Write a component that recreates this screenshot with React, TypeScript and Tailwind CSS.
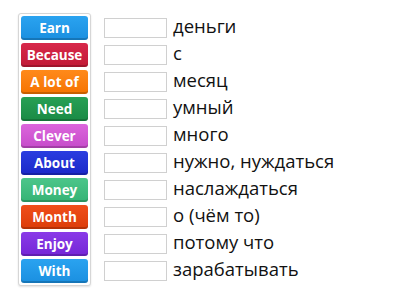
import React from 'react';

const tiles = [
  { label: 'Earn', cls: 'bg-gradient-to-b from-[#2aa3f0] to-[#1a8fe0]' },
  { label: 'Because', cls: 'bg-gradient-to-b from-[#d8284a] to-[#c11a36]' },
  { label: 'A lot of', cls: 'bg-gradient-to-b from-[#ff8a1a] to-[#f57300]' },
  { label: 'Need', cls: 'bg-gradient-to-b from-[#28a055] to-[#1a8a45]' },
  { label: 'Clever', cls: 'bg-gradient-to-b from-[#dc66dc] to-[#c64bca]' },
  { label: 'About', cls: 'bg-gradient-to-b from-[#2a3de0] to-[#1a28c8]' },
  { label: 'Money', cls: 'bg-gradient-to-b from-[#4cc68a] to-[#35b375]' },
  { label: 'Month', cls: 'bg-gradient-to-b from-[#f04e1a] to-[#dc3c08]' },
  { label: 'Enjoy', cls: 'bg-gradient-to-b from-[#8a3ae8] to-[#7426d6]' },
  { label: 'With', cls: 'bg-gradient-to-b from-[#2aa3f0] to-[#1a8fe0]' },
];

const answers = [
  'деньги',
  'с',
  'месяц',
  'умный',
  'много',
  'нужно, нуждаться',
  'наслаждаться',
  'о (чём то)',
  'потому что',
  'зарабатывать',
];

export default function App() {
  return (
    <div className="w-[400px] h-[300px] bg-white overflow-hidden font-['Open_Sans',sans-serif]">
      <div className="flex items-start pt-[13px] pl-[18px]">
        <div className="flex flex-col gap-[3px] p-[2px] border border-[#d6d6d6] rounded-[3px] shadow-[0_1px_2px_rgba(0,0,0,0.12)] bg-white">
          {tiles.map(t => (
            <div
              key={t.label}
              className={`w-[67px] h-[24px] rounded-[3px] flex items-center justify-center text-white text-[13.5px] font-bold shadow-[inset_0_-2px_0_rgba(0,0,0,0.18)] ${t.cls}`}
            >
              {t.label}
            </div>
          ))}
        </div>
        <div className="flex flex-col gap-[3px] pt-[3px] ml-[13px]">
          {answers.map(a => (
            <div key={a} className="h-[24px] flex items-center">
              <div className="w-[63px] h-[20px] border border-[#d0d0d0] bg-white shrink-0" />
              <span className="ml-[6px] pb-[3px] text-[18.5px] text-[#111] leading-none whitespace-nowrap">{a}</span>
            </div>
          ))}
        </div>
      </div>
    </div>
  );
}
